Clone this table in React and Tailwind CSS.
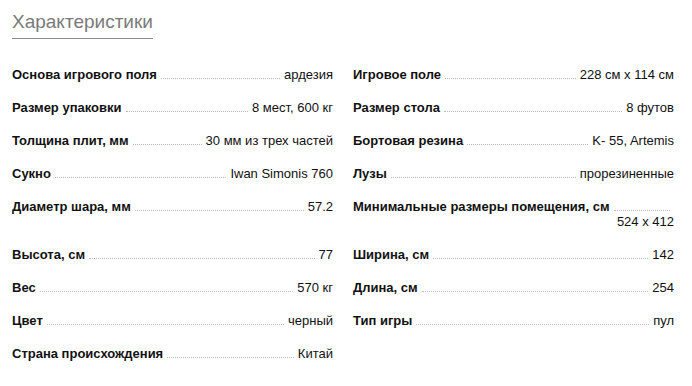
import React from 'react';

const specs = [
  { label: 'Основа игрового поля', value: 'ардезия' },
  { label: 'Игровое поле', value: '228 см x 114 см' },
  { label: 'Размер упаковки', value: '8 мест, 600 кг' },
  { label: 'Размер стола', value: '8 футов' },
  { label: 'Толщина плит, мм', value: '30 мм из трех частей' },
  { label: 'Бортовая резина', value: 'K- 55, Artemis' },
  { label: 'Сукно', value: 'Iwan Simonis 760' },
  { label: 'Лузы', value: 'прорезиненные' },
  { label: 'Диаметр шара, мм', value: '57.2' },
  { label: 'Минимальные размеры помещения, см', value: '524 x 412', wrap: true },
  { label: 'Высота, см', value: '77' },
  { label: 'Ширина, см', value: '142' },
  { label: 'Вес', value: '570 кг' },
  { label: 'Длина, см', value: '254' },
  { label: 'Цвет', value: 'черный' },
  { label: 'Тип игры', value: 'пул' },
  { label: 'Страна происхождения', value: 'Китай' },
];

const SpecRow = ({ label, value, wrap }) => (
  <div>
    <div className="flex items-end">
      <span className="font-bold whitespace-nowrap">{label}</span>
      <span className="flex-1 mx-[4px] mb-[3px] border-b border-dotted border-[#bbb]" />
      {!wrap && <span className="whitespace-nowrap">{value}</span>}
    </div>
    {wrap && <div className="text-right">{value}</div>}
  </div>
);

const App = () => {
  return (
    <div
      className="min-h-screen bg-white pl-[12px] pr-[18px] pt-[10px] text-[#111]"
      style={{ fontFamily: '"Liberation Sans", Arial, sans-serif' }}
    >
      <h2 className="inline-block text-[19px] leading-[24px] text-[#7a7a7a] pb-[4px] border-b border-[#8a8a8a]">
        Характеристики
      </h2>

      <div className="grid grid-cols-2 gap-x-[20px] gap-y-[18px] mt-[28px] text-[13px] leading-[15px]">
        {specs.map((s) => (
          <SpecRow key={s.label} {...s} />
        ))}
      </div>
    </div>
  );
};

export default App;
